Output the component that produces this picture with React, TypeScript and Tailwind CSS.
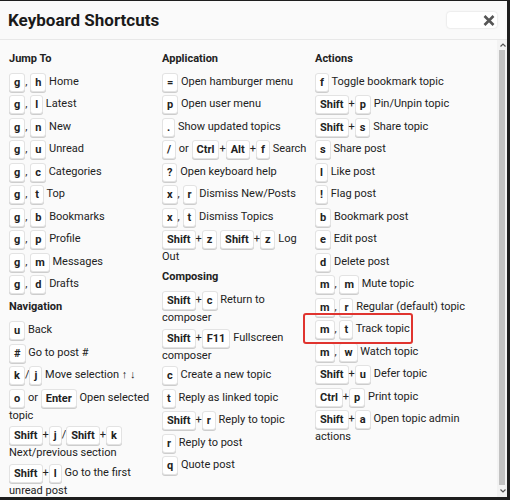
import React from "react";

type Part = string | { k: string };
type Item = { keys: Part[]; label: string };
type Section = { title: string; items: Item[] };

const K = (k: string) => ({ k });

const columns: Section[][] = [
  [
    {
      title: "Jump To",
      items: [
        { keys: [K("g"), ", ", K("h")], label: "Home" },
        { keys: [K("g"), ", ", K("l")], label: "Latest" },
        { keys: [K("g"), ", ", K("n")], label: "New" },
        { keys: [K("g"), ", ", K("u")], label: "Unread" },
        { keys: [K("g"), ", ", K("c")], label: "Categories" },
        { keys: [K("g"), ", ", K("t")], label: "Top" },
        { keys: [K("g"), ", ", K("b")], label: "Bookmarks" },
        { keys: [K("g"), ", ", K("p")], label: "Profile" },
        { keys: [K("g"), ", ", K("m")], label: "Messages" },
        { keys: [K("g"), ", ", K("d")], label: "Drafts" },
      ],
    },
    {
      title: "Navigation",
      items: [
        { keys: [K("u")], label: "Back" },
        { keys: [K("#")], label: "Go to post #" },
        { keys: [K("k"), "/", K("j")], label: "Move selection \u2191 \u2193" },
        { keys: [K("o"), " or ", K("Enter")], label: "Open selected topic" },
        { keys: [K("Shift"), "+", K("j"), "/", K("Shift"), "+", K("k")], label: "Next/previous section" },
        { keys: [K("Shift"), "+", K("l")], label: "Go to the first unread post" },
      ],
    },
  ],
  [
    {
      title: "Application",
      items: [
        { keys: [K("=")], label: "Open hamburger menu" },
        { keys: [K("p")], label: "Open user menu" },
        { keys: [K(".")], label: "Show updated topics" },
        { keys: [K("/"), " or ", K("Ctrl"), "+", K("Alt"), "+", K("f")], label: "Search" },
        { keys: [K("?")], label: "Open keyboard help" },
        { keys: [K("x"), ", ", K("r")], label: "Dismiss New/Posts" },
        { keys: [K("x"), ", ", K("t")], label: "Dismiss Topics" },
        { keys: [K("Shift"), "+", K("z"), " ", K("Shift"), "+", K("z")], label: "Log Out" },
      ],
    },
    {
      title: "Composing",
      items: [
        { keys: [K("Shift"), "+", K("c")], label: "Return to composer" },
        { keys: [K("Shift"), "+", K("F11")], label: "Fullscreen composer" },
        { keys: [K("c")], label: "Create a new topic" },
        { keys: [K("t")], label: "Reply as linked topic" },
        { keys: [K("Shift"), "+", K("r")], label: "Reply to topic" },
        { keys: [K("r")], label: "Reply to post" },
        { keys: [K("q")], label: "Quote post" },
      ],
    },
  ],
  [
    {
      title: "Actions",
      items: [
        { keys: [K("f")], label: "Toggle bookmark topic" },
        { keys: [K("Shift"), "+", K("p")], label: "Pin/Unpin topic" },
        { keys: [K("Shift"), "+", K("s")], label: "Share topic" },
        { keys: [K("s")], label: "Share post" },
        { keys: [K("l")], label: "Like post" },
        { keys: [K("!")], label: "Flag post" },
        { keys: [K("b")], label: "Bookmark post" },
        { keys: [K("e")], label: "Edit post" },
        { keys: [K("d")], label: "Delete post" },
        { keys: [K("m"), ", ", K("m")], label: "Mute topic" },
        { keys: [K("m"), ", ", K("r")], label: "Regular (default) topic" },
        { keys: [K("m"), ", ", K("t")], label: "Track topic" },
        { keys: [K("m"), ", ", K("w")], label: "Watch topic" },
        { keys: [K("Shift"), "+", K("u")], label: "Defer topic" },
        { keys: [K("Ctrl"), "+", K("p")], label: "Print topic" },
        { keys: [K("Shift"), "+", K("a")], label: "Open topic admin actions" },
      ],
    },
  ],
];

function Kbd({ children }: { children: React.ReactNode }) {
  return (
    <kbd className="inline-block align-middle rounded-[3px] border border-[#e3e3e3] bg-white px-[4px] py-[1px] text-[11px] font-bold leading-[15px] text-[#222] shadow-[0_1px_0_#cdcdcd] [font-family:Roboto,sans-serif]">
      {children}
    </kbd>
  );
}

function Shortcut({ item }: { item: Item }) {
  return (
    <li className="mb-[3.5px] leading-[15px]">
      {item.keys.map((p, i) =>
        typeof p === "string" ? (
          <span key={i}>{p}</span>
        ) : (
          <Kbd key={i}>{p.k}</Kbd>
        )
      )}{" "}
      {item.label}
    </li>
  );
}

function Column({ sections }: { sections: Section[] }) {
  return (
    <div>
      {sections.map((s) => (
        <div key={s.title} className="mb-[5px]">
          <h4 className="mb-[7px] text-[11px] font-bold leading-[15px]">{s.title}</h4>
          <ul>
            {s.items.map((it, i) => (
              <Shortcut key={i} item={it} />
            ))}
          </ul>
        </div>
      ))}
    </div>
  );
}

export default function App() {
  return (
    <div className="relative h-[500px] w-[510px] bg-[#1e1e1e] pt-[1px] pr-[3px] pb-[3px] text-[11px] text-[#222] [font-family:Roboto,sans-serif]">
      <div className="flex h-full flex-col bg-[#fafafa]">
        <div className="flex h-[39px] shrink-0 items-center justify-between border-b border-[#e8e8e8] pl-[8px] pr-[10px]">
          <h3 className="text-[17px] font-bold leading-none text-[#1a1a1a]">Keyboard Shortcuts</h3>
          <button className="flex h-[16px] w-[50px] items-center justify-end rounded-[3px] bg-white pr-[2px] shadow-[0_0_2px_rgba(0,0,0,0.18)]">
            <svg width="12" height="11" viewBox="0 0 12 11">
              <path d="M1.5 1 L10.5 10 M10.5 1 L1.5 10" stroke="#555" strokeWidth="2.6" />
            </svg>
          </button>
        </div>
        <div className="flex min-h-0 flex-1">
          <div className="grid flex-1 grid-cols-[153px_153px_153px] overflow-hidden pl-[9px] pt-[10.5px]">
            {columns.map((c, i) => (
              <Column key={i} sections={c} />
            ))}
          </div>
          <div className="flex w-[10px] shrink-0 flex-col bg-[#f3f3f3]">
            <div className="flex h-[10px] items-center justify-center pl-[1px]">
              <svg width="6" height="4" viewBox="0 0 6 4">
                <path d="M0.5 3.5 L3 1 L5.5 3.5" fill="none" stroke="#555" strokeWidth="1.2" />
              </svg>
            </div>
            <div className="ml-[1.5px] mr-[2px] flex-1 bg-[#c2c2c2]" />
            <div className="flex h-[12px] items-center justify-center pl-[1px]">
              <svg width="6" height="4" viewBox="0 0 6 4">
                <path d="M0.5 0.5 L3 3 L5.5 0.5" fill="none" stroke="#555" strokeWidth="1.2" />
              </svg>
            </div>
          </div>
        </div>
      </div>
      <div className="pointer-events-none absolute left-[302.5px] top-[312.5px] h-[31px] w-[110px] rounded-[3px] border-2 border-[#e0342f]" />
    </div>
  );
}
